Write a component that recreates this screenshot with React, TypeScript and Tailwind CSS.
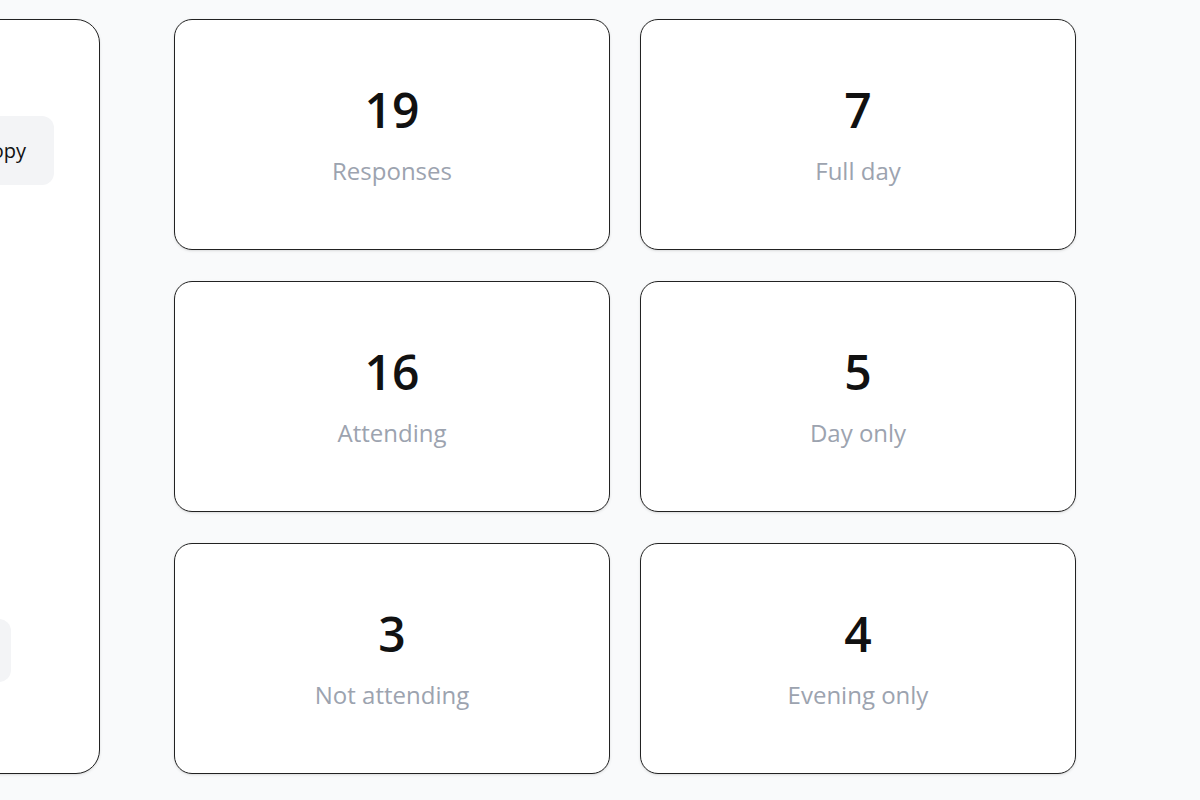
import React from "react";

interface StatProps {
  value: number;
  label: string;
}

const stats: StatProps[] = [
  { value: 19, label: "Responses" },
  { value: 7, label: "Full day" },
  { value: 16, label: "Attending" },
  { value: 5, label: "Day only" },
  { value: 3, label: "Not attending" },
  { value: 4, label: "Evening only" },
];

const StatCard: React.FC<StatProps> = ({ value, label }) => (
  <div className="h-[231px] rounded-[18px] border border-[#222] bg-white shadow-sm flex flex-col items-center justify-center pt-[3px]">
    <p className="text-[48px] leading-[48px] font-semibold text-[#111]">{value}</p>
    <p className="mt-[21px] text-[24px] leading-[32px] text-[#9ca3af]">{label}</p>
  </div>
);

export default function App() {
  return (
    <div
      className="min-h-[800px] w-[1200px] overflow-hidden bg-[#f9fafb] pt-[19px]"
      style={{ fontFamily: '"Segoe UI", "Open Sans", "Noto Sans", sans-serif' }}
    >
      <div className="flex items-start gap-[74px]">
        {/* share panel, scrolled partly out of view */}
        <div className="-ml-[320px] w-[420px] h-[755px] shrink-0 rounded-3xl border border-[#222] bg-white shadow-sm flex flex-col pr-[45px] pt-[96px]">
          <div className="flex justify-end">
            <button className="h-[69px] rounded-xl bg-[#f3f4f6] px-[28px] text-[20px] text-[#111]">
              Copy
            </button>
          </div>
          <div className="mt-[434px] flex justify-start">
            <div className="-ml-[100px] h-[63px] w-[430px] rounded-xl bg-[#f3f4f6]" />
          </div>
        </div>

        <div className="grid w-[902px] grid-cols-2 gap-x-[30px] gap-y-[31px]">
          {stats.map((s) => (
            <StatCard key={s.label} value={s.value} label={s.label} />
          ))}
        </div>
      </div>
    </div>
  );
}
